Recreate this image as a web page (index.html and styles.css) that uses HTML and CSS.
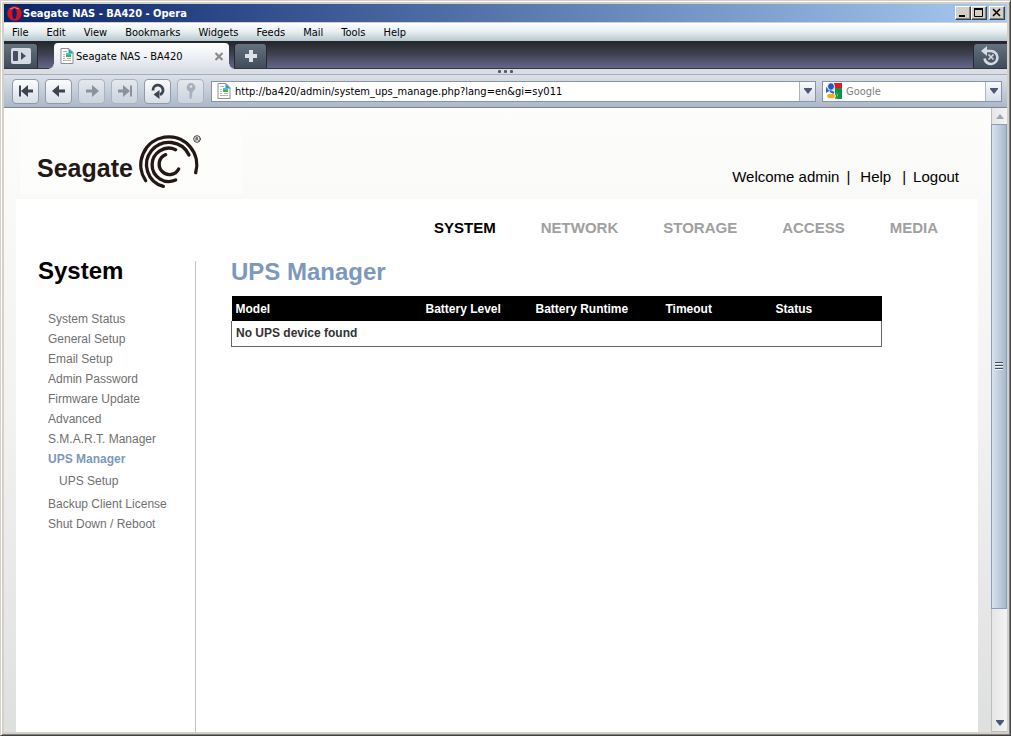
FILE: index.html
```html
<!DOCTYPE html>
<html lang="en">
<head>
<meta charset="utf-8">
<title>Seagate NAS - BA420</title>
<link rel="stylesheet" href="styles.css">
</head>
<body>
<svg class="defs" width="0" height="0" aria-hidden="true">
  <symbol id="page-icon" viewBox="0 0 14 16">
    <path d="M1 .5h8l4 4v11H1z" fill="#fff" stroke="#8a8f94"/>
    <path d="M8.500 0.500l5 5h-5z" fill="#2d9aa8"/>
    <path d="M3 3.500h4M3 6.500h2M3 8.500h2M3 10.500h2M3 12.500h8M7 10.500h4" stroke="#b4b4b4"/>
    <path d="M6 5h5v2H6z" fill="#34c7dd"/><path d="M6 7h5v2H6z" fill="#4caf2e"/>
  </symbol>
  <symbol id="arrow-down" viewBox="0 0 8 6"><path d="M0 0h8v1L4 6 0 1z" fill="#4b5873"/></symbol>
</svg>
<div class="window">
  <header class="titlebar">
    <svg class="opera" viewBox="0 0 15 15" aria-hidden="true"><ellipse cx="7.500" cy="7.500" rx="7.200" ry="7.300" fill="#d4141c"/><ellipse cx="7.500" cy="7.500" rx="2.200" ry="5.500" fill="#0b2070"/><path d="M3 3Q7 0 12 3" stroke="#f08080" fill="none"/></svg>
    <span class="caption">Seagate NAS - BA420 - Opera</span>
    <div class="winbtns">
      <button aria-label="Minimize"><svg viewBox="0 0 12 10"><path d="M2 8h6" stroke="#000" stroke-width="2"/></svg></button>
      <button aria-label="Maximize"><svg viewBox="0 0 12 10"><path d="M1.500 1v7.500h8V1" stroke="#000" fill="none"/><path d="M1 1h9" stroke="#000" stroke-width="2"/></svg></button>
      <button class="close" aria-label="Close"><svg viewBox="0 0 12 10"><path d="M2 1l7 7M9 1L2 8" stroke="#000" stroke-width="1.600"/></svg></button>
    </div>
  </header>
  <nav class="menubar" aria-label="Menu">
    <button>File</button><button>Edit</button><button>View</button><button>Bookmarks</button><button>Widgets</button><button>Feeds</button><button>Mail</button><button>Tools</button><button>Help</button>
  </nav>
  <div class="tabbar">
    <button class="darkbtn panel" aria-label="Panels"><svg width="20" height="16" viewBox="0 0 20 16"><rect width="20" height="16" rx="2" fill="#d5dbe3"/><path d="M2.500 3.500h4v9h-4z" fill="#465062" stroke="#465062"/><path d="M10 4v8l5-4z" fill="#465062"/></svg></button>
    <div class="tab">
      <svg class="pageicon"><use href="#page-icon"/></svg>
      <span class="tabname">Seagate NAS - BA420</span>
      <button class="tabclose" aria-label="Close tab"><svg width="10" height="9" viewBox="0 0 10 9"><path d="M1.500 1l7 7M8.500 1l-7 7" stroke="#8b8b8b" stroke-width="2.200"/></svg></button>
    </div>
    <button class="darkbtn plus" aria-label="New tab"><svg width="14" height="14" viewBox="0 0 14 14"><path d="M7 1v12M1 7h12" stroke="#dce1e8" stroke-width="4"/></svg></button>
    <button class="darkbtn trash" aria-label="Closed tabs"><svg width="20" height="20" viewBox="0 0 20 20"><path d="M4 5h6a6.500 6.500 0 1 1-6.500 7.500" fill="none" stroke="#d5dbe5" stroke-width="2.600"/><path d="M0 5l6-5v10z" fill="#d5dbe5"/><path d="M7.500 8.500l5 5M12.500 8.500l-5 5" stroke="#d5dbe5" stroke-width="1.600"/></svg></button>
  </div>
  <div class="grip"><i></i><i></i><i></i></div>
  <div class="toolbar">
    <button class="tool" aria-label="Rewind"><svg viewBox="0 0 16 16"><path d="M2 2.500v11" stroke="#3b4552" stroke-width="2"/><path d="M3 8l7-6v4.500h5v3h-5V14z" fill="#3b4552"/></svg></button>
    <button class="tool" aria-label="Back"><svg viewBox="0 0 16 16"><path d="M1 8l7-6v4.500h6v3H8V14z" fill="#3b4552"/></svg></button>
    <button class="tool off" aria-label="Forward"><svg viewBox="0 0 16 16"><path d="M15 8L8 2v4.500H2v3h6V14z" fill="#8b929e"/></svg></button>
    <button class="tool off" aria-label="Fast forward"><svg viewBox="0 0 16 16"><path d="M14 2.500v11" stroke="#8b929e" stroke-width="2"/><path d="M13 8L6 2v4.500H1v3h5V14z" fill="#8b929e"/></svg></button>
    <button class="tool" aria-label="Reload"><svg viewBox="0 0 16 16"><path d="M3 7.500a5 5 0 1 1 7 4.200" fill="none" stroke="#3b4552" stroke-width="2.800"/><path d="M3.500 11.500l6-4.500v9z" fill="#3b4552"/></svg></button>
    <button class="tool off" aria-label="Wand"><svg viewBox="0 0 16 16"><circle cx="8" cy="4.500" r="4.400" fill="#a7afbb"/><circle cx="8" cy="3.500" r="1.300" fill="#e0e5ec"/><path d="M6.500 8h3v2.500l-1 1 1 1-1 1 .5 1L8 16l-1.500-1z" fill="#a7afbb"/></svg></button>
    <div class="field url">
      <svg class="pageicon"><use href="#page-icon"/></svg>
      <input aria-label="Address" value="http://ba420/admin/system_ups_manage.php?lang=en&amp;gi=sy011">
      <button class="drop" aria-label="Address history"><svg width="8" height="6"><use href="#arrow-down"/></svg></button>
    </div>
    <div class="field search">
      <svg class="google" viewBox="0 0 16 16" aria-hidden="true"><path d="M8 0h8v5H8z" fill="#e9161d"/><path d="M8 5h8v11H8z" fill="#129447"/><path d="M0 4l5 3-5 3z" fill="#2d68c4"/><ellipse cx="5" cy="3.500" rx="3.500" ry="3.900" fill="#1d5bbf" stroke="#fff"/><path d="M8 5q3 2 1 4 5 3 1 7H6z" fill="#fff"/><path d="M9 5l4 2q-1 2-3 2l2 5-3 2z" fill="#129447"/><ellipse cx="5" cy="13" rx="4.300" ry="2.700" fill="#f4ad0a" stroke="#fff"/><path d="M4 8l4 2" stroke="#2d68c4" stroke-width="2"/></svg>
      <input aria-label="Search" placeholder="Google">
      <button class="drop" aria-label="Search engines"><svg width="8" height="6"><use href="#arrow-down"/></svg></button>
    </div>
  </div>
  <div class="viewport">
    <div class="page">
      <div class="masthead">
        <div class="logo"><span class="brand">Seagate</span>
          <svg class="swirl" viewBox="411 69 192 168" aria-hidden="true"><g fill="none" stroke="#231815" stroke-width="10" stroke-linecap="round"><path d="M437 212A84 84 0 1 1 587 188"/><path d="M490 229A67 67 0 1 1 567 135"/><path d="M527 210A50 50 0 1 1 527 119"/><path d="M536 177A31 31 0 1 1 497 134"/><circle cx="591" cy="87" r="10" stroke-width="2.500"/><path d="M588 92V82h4q3 3 0 5h-4m4 0l3 5" stroke-width="2"/></g></svg>
        </div>
        <div class="account"><span>Welcome admin</span><span class="bar">|</span><a href="#help">Help</a><span class="bar wide">|</span><a href="#logout">Logout</a></div>
      </div>
      <div class="sheet">
        <nav class="sections" aria-label="Sections"><a class="current" href="#system">SYSTEM</a><a href="#network">NETWORK</a><a href="#storage">STORAGE</a><a href="#access">ACCESS</a><a href="#media">MEDIA</a></nav>
        <div class="columns">
          <aside class="side">
            <h2>System</h2>
            <ul>
              <li><a href="#status">System Status</a></li>
              <li><a href="#general">General Setup</a></li>
              <li><a href="#email">Email Setup</a></li>
              <li><a href="#password">Admin Password</a></li>
              <li><a href="#firmware">Firmware Update</a></li>
              <li><a href="#advanced">Advanced</a></li>
              <li><a href="#smart">S.M.A.R.T. Manager</a></li>
              <li><a class="current" href="#ups">UPS Manager</a>
                <ul class="sub"><li><a href="#upssetup">UPS Setup</a></li></ul></li>
              <li><a href="#license">Backup Client License</a></li>
              <li><a href="#shutdown">Shut Down / Reboot</a></li>
            </ul>
          </aside>
          <main>
            <h1>UPS Manager</h1>
            <table>
              <thead><tr><th class="c-model">Model</th><th class="c-level">Battery Level</th><th class="c-run">Battery Runtime</th><th class="c-time">Timeout</th><th>Status</th></tr></thead>
              <tbody><tr><td colspan="5">No UPS device found</td></tr></tbody>
            </table>
          </main>
        </div>
      </div>
    </div>
    <div class="scrollbar" aria-hidden="true">
      <div class="cap"><svg width="8" height="5" viewBox="0 0 8 5"><path d="M4 0l4 5H0z" fill="#a0a5ad"/></svg></div>
      <div class="track"><div class="thumb"><i></i><i></i><i></i></div></div>
      <div class="cap bottom"><svg width="8" height="6"><use href="#arrow-down"/></svg></div>
    </div>
  </div>
</div>
</body>
</html>
```

FILE: styles.css
```css
* { box-sizing: border-box; }
body { margin: 0; font-family: "Liberation Sans", Arial, sans-serif; }
button { font: inherit; color: inherit; border: 0; padding: 0; margin: 0; background: none; display: flex; align-items: center; justify-content: center; }
a { color: inherit; text-decoration: none; }
h1, h2, ul { margin: 0; padding: 0; }
ul { list-style: none; }
.defs { position: absolute; }

.window {
  min-height: 100vh; display: flex; flex-direction: column;
  border: 1px solid #d4d0c8; border-right-color: #404040; border-bottom-color: #404040;
  background: #d4d0c8; padding: 3px;
  box-shadow: inset 1px 1px #fff, inset -1px -1px #808080;
}
.titlebar, .menubar, .tabbar, .toolbar { font-family: "DejaVu Sans Condensed", "DejaVu Sans", sans-serif; font-size: 11px; }

.titlebar { height: 18px; display: flex; align-items: center; padding: 0 2px; color: #fff; background: linear-gradient(90deg, #0a246a, #a6caf0); }
.opera { width: 15px; height: 15px; margin: 0 1px 0 1px; }
.caption { font-weight: bold; flex: 1; white-space: nowrap; }
.winbtns { display: flex; }
.winbtns button { width: 16px; height: 14px; background: #d4d0c8; border: 1px solid #fff; border-right-color: #404040; border-bottom-color: #404040; box-shadow: inset -1px -1px #808080; }
.winbtns svg { width: 12px; height: 10px; }
.winbtns .close { margin-left: 2px; }

.menubar { height: 18px; margin-top: 1px; display: flex; gap: 18px; padding: 0 8px; background: linear-gradient(#fff, #e6edf0 50%, #b5c8d0); }

.tabbar { height: 28px; display: flex; align-items: flex-end; background: linear-gradient(#23252a, #3d3f4d 45%, #62678a); border-bottom: 1px solid #34363c; }
.darkbtn { height: 25px; background: linear-gradient(#66717f, #414c5a); border: 1px solid #252a32; border-bottom: 0; border-radius: 4px 4px 0 0; }
.panel { width: 34px; border-left: 0; border-top-left-radius: 0; margin-right: 16px; }
.plus { width: 33px; margin-left: 5px; }
.trash { width: 34px; margin-left: auto; border-right: 0; border-top-right-radius: 0; }
.tab { width: 175px; height: 26px; margin-bottom: -1px; position: relative; display: flex; align-items: center; padding: 0 5px 0 6px; background: linear-gradient(#fff, #dde2ea); border-radius: 4px 4px 0 0; }
.tab::before, .tab::after { content: ""; position: absolute; bottom: 0; width: 5px; height: 5px; }
.tab::before { left: -5px; background: radial-gradient(circle at 0 0, transparent 4px, #dde2ea 5px); }
.tab::after { right: -5px; background: radial-gradient(circle at 100% 0, transparent 4px, #dde2ea 5px); }
.pageicon { width: 14px; height: 16px; flex: none; }
.tabname { flex: 1; margin-left: 2px; white-space: nowrap; }
.tabclose { width: 10px; height: 12px; }

.grip { height: 6px; background: #d9dee6; border-bottom: 1px solid #a4adb9; display: flex; justify-content: center; align-items: center; gap: 3px; }
.grip i { width: 3px; height: 3px; border-radius: 1px; background: #555b66; }

.toolbar { height: 33px; display: flex; align-items: center; padding: 0 5px 0 8px; background: linear-gradient(#dce1e8, #acb8c9); border-bottom: 1px solid #7b8698; }
.tool { width: 27px; height: 25px; margin-right: 6px; border: 1px solid #8f99a8; border-radius: 4px; background: linear-gradient(#fbfcfd, #d8dee7); flex: none; }
.tool svg { width: 16px; height: 16px; }
.tool.off { background: linear-gradient(#e4e8ee, #cbd3de); border-color: #aab3c1; }
.field { height: 21px; display: flex; align-items: center; background: #fff; border: 1px solid #8894a6; padding-left: 5px; min-width: 0; }
.field input { flex: 1; width: 100%; min-width: 0; height: 19px; border: 0; padding: 0; margin-left: 4px; background: none; font: inherit; color: #000; outline: 0; }
.field input::placeholder { color: #808080; opacity: 1; }
.url { flex: 1; margin: 0 6px 0 1px; }
.search { flex: 0 0 180px; padding-left: 3px; }
.google { width: 16px; height: 16px; flex: none; }
.drop { width: 16px; height: 19px; flex: none; border-left: 1px solid #a9b3c2; background: linear-gradient(#f7f9fb, #d8dfe8); }

.viewport { flex: 1; display: flex; background: #fff; }
.page { flex: 1; display: flex; flex-direction: column; padding-right: 13px; background: linear-gradient(#fdfdfb, #f8f8f7 20%, #f2f2f1 50%, #dedfdf); }
.masthead { height: 91px; display: flex; justify-content: space-between; align-items: flex-start; padding: 10px 19px 0 16px; }
.logo { width: 222px; height: 76px; padding: 15px 0 0 17px; display: flex; align-items: flex-start; background: #fdfdfb; }
.brand { margin-top: 21px; font-size: 25px; line-height: 28px; font-weight: bold; color: #231815; }
.swirl { width: 64px; height: 56px; margin-left: 4px; }
.account { display: flex; margin-top: 49px; font-size: 15px; line-height: 20px; color: #000; }
.bar { margin: 0 10px 0 7px; }
.bar.wide { margin: 0 7px 0 11px; }

.sheet { flex: 1; display: flex; flex-direction: column; margin-left: 12px; background: #fff; }
.sections { display: flex; justify-content: flex-end; gap: 45px; padding: 19px 40px 0 0; font-size: 15px; line-height: 20px; font-weight: bold; color: #a0a0a0; }
.sections .current { color: #000; }
.columns { flex: 1; display: flex; padding-top: 23px; }
.side { width: 180px; border-right: 1px solid #c3c3c3; padding-left: 22px; }
h1, h2 { font-size: 24px; line-height: 20px; }
h2 { color: #000; margin-bottom: 28px; }
.side ul { font-size: 12px; line-height: 20px; color: #707070; padding-left: 10px; }
.side .current { color: #7b98bd; font-weight: bold; }
.side .sub { line-height: 25px; padding-left: 11px; }
main { flex: 1; padding: 0 96px 0 35px; }
h1 { color: #7b98bd; line-height: 22px; margin-bottom: 13px; }
table { width: 100%; border-collapse: collapse; table-layout: fixed; font-size: 12px; }
th { height: 25px; padding: 0 4px; text-align: left; background: #000; color: #fff; }
td { height: 25px; padding: 0 4px; border: 1px solid #666; border-top: 0; font-weight: bold; color: #333; }
.c-model { width: 190px; }
.c-level, .c-time { width: 110px; }
.c-run { width: 130px; }

.scrollbar { width: 16px; display: flex; flex-direction: column; background: linear-gradient(90deg, #e6e6e6, #f3f3f3); border: 1px solid #bdbdbd; border-width: 0 0 1px 1px; }
.cap { height: 16px; display: flex; align-items: center; justify-content: center; }
.track { flex: 1; }
.thumb { height: 82%; margin-left: -1px; border: 1px solid #849fc2; background: linear-gradient(90deg, #d9e2ec, #a8b9cd); display: flex; flex-direction: column; align-items: center; justify-content: center; gap: 1px; }
.thumb i { width: 8px; height: 2px; background: #444c58; border-bottom: 1px solid #eef2f6; }
```
